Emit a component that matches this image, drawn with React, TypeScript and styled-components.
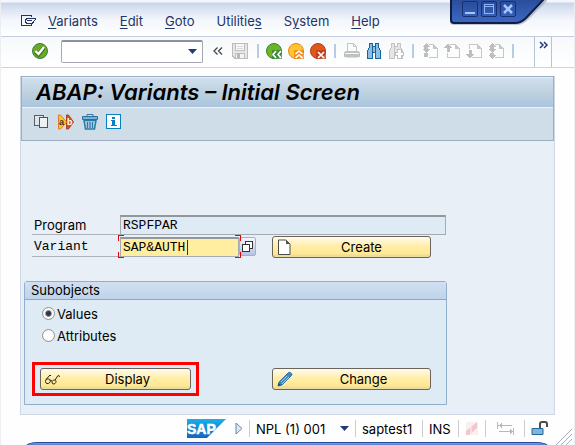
import React from "react";
import styled, { createGlobalStyle } from "styled-components";

const GlobalStyle = createGlobalStyle`
  * { box-sizing: border-box; }
  body { margin: 0; font-family: Inter, "Liberation Sans", sans-serif; font-size: 13px; line-height: 16px; color: #000; }
  button, input, select { font: inherit; color: inherit; margin: 0; }
`;

const Window = styled.div`
  position: relative;
  display: flex;
  flex-direction: column;
  min-height: 100vh;
  overflow: hidden;
  background: #fefefe;
  border-left: 1px solid #eceef2;
  border-right: 1px solid #eceef2;
`;

const MenuBar = styled.nav`
  display: flex;
  align-items: center;
  gap: 22px;
  height: 37px;
  padding: 6px 20px 0;
  border-bottom: 1px solid #c3cddd;
  background: linear-gradient(#f4f7fb 0, #f4f7fb 2px, #c9d5ea 3px, #dde5f3 10px, #f3f6fb 20px, #fff 36px);
`;

const MenuButton = styled.button`
  padding: 0;
  border: 0;
  background: none;
  color: #203468;
  u { text-underline-offset: 2px; }
`;

const WindowMenu = styled(MenuButton)`
  display: flex;
  width: 16px;
  margin-right: -11px;
`;

const CaptionTab = styled.div`
  position: absolute;
  top: 0;
  right: 27px;
  width: 98px;
  height: 27px;
`;

const CaptionShape = styled.svg`
  display: block;
  position: absolute;
  inset: 0;
`;

const CaptionButtons = styled.div`
  position: relative;
  display: flex;
  gap: 3px;
  padding: 1px 0 0 13px;
`;

const CaptionButton = styled.button`
  display: flex;
  width: 16px;
  height: 16px;
  padding: 0;
  border: 1px solid #172f73;
  border-radius: 2px;
  background: linear-gradient(#294c9b, #3960b6);
`;

const ToolBar = styled.div`
  display: flex;
  align-items: center;
  height: 31px;
  padding: 0 22px 2px 31px;
  border-bottom: 1px solid #cbd3df;
  background: linear-gradient(#f7f9fc, #fff);
`;

const IconButton = styled.button<{ $gap?: number }>`
  display: flex;
  flex: none;
  width: 16px;
  height: 16px;
  margin: 0 0 0 ${(p) => p.$gap ?? 6}px;
  padding: 0;
  border: 0;
  background: none;
`;

const CommandBox = styled.div`
  display: grid;
  flex: none;
  width: 142px;
  height: 23px;
  margin: 1px 10px 0 13px;
  align-items: center;
  > * { grid-area: 1 / 1; }
  > svg { justify-self: end; margin-right: 6px; pointer-events: none; }
`;

const CommandSelect = styled.select`
  width: 100%;
  height: 100%;
  appearance: none;
  border: 1px solid #a3a8b1;
  border-top: 2px solid #8c9098;
  border-radius: 2px;
  background: #fff;
`;

const Chevron = styled(IconButton)`
  width: 10px;
`;

const Divider = styled.span<{ $gap?: number }>`
  flex: none;
  width: 2px;
  height: 14px;
  margin-left: ${(p) => p.$gap ?? 8}px;
  background: #b5cce3;
`;

const MoreButton = styled.button`
  display: flex;
  flex: none;
  align-self: stretch;
  width: 18px;
  margin: 0 0 -2px auto;
  padding: 4px 0 4px 4px;
  border: 0;
  border-left: 1px solid #b7c4d8;
  border-right: 1px solid #b7c4d8;
  background: none;
`;

const Screen = styled.main`
  flex: 1;
  margin: 8px 19px 0 19px;
  padding-bottom: 9px;
  border: solid #ced7e6;
  border-width: 0 1px 1px;
  background: #e8eff6;
`;

const Heading = styled.header`
  border: 1px solid #9daec3;
  background: #cedde8;
`;

const Title = styled.h1`
  height: 31px;
  margin: 0;
  padding: 2px 14px;
  border-top: 1px solid #e6eff5;
  border-bottom: 1px solid #edf4f8;
  background: linear-gradient(#cfdfed, #bed1df 50%, #abc4de);
  font-size: 22px;
  font-weight: 600;
  font-style: italic;
  line-height: 24px;
  white-space: nowrap;
`;

const AppToolBar = styled.div`
  display: flex;
  gap: 8px;
  height: 32px;
  padding: 6px 12px;
`;

const Form = styled.form`
  margin: 74px 107px 0 3px;
`;

const Fields = styled.div`
  margin: 0 1px 0 8px;
`;

const FieldRow = styled.div`
  display: flex;
  height: 22px;
`;

const Label = styled.label<{ $mono?: boolean }>`
  flex: none;
  width: 88px;
  height: 20px;
  padding: 2px;
  border-bottom: 1px solid #aeb4ba;
  ${(p) => p.$mono && `font-family: "Liberation Mono", monospace;`}
`;

const TextField = styled.input<{ $active?: boolean }>`
  flex: ${(p) => (p.$active ? "none" : "1")};
  min-width: 0;
  width: 119px;
  height: 20px;
  padding: 0 2px;
  border: 1px solid #a5abb0;
  border-top: 2px solid #92979b;
  background: ${(p) => (p.$active ? "#ffee9f" : "#dfebf4")};
  font-family: "Liberation Mono", monospace;
  outline: 0;
`;

const FocusFrame = styled.div`
  position: relative;
  display: flex;
  width: 119px;
`;

const FocusCorners = styled.svg`
  position: absolute;
  top: -2px;
  left: -2px;
  pointer-events: none;
`;

const Caret = styled.span`
  position: absolute;
  top: 3px;
  left: 67px;
  width: 1px;
  height: 15px;
  background: #20335c;
`;

const LookupButton = styled.button`
  display: flex;
  flex: none;
  width: 17px;
  height: 19px;
  padding: 2px 1px;
  border: 1px solid #a4b2c8;
  border-radius: 2px;
  background: linear-gradient(#f3f7fe, #b4c3e5);
`;

const ActionButton = styled.button<{ $width?: number }>`
  display: flex;
  flex: none;
  align-items: center;
  width: ${(p) => p.$width ?? 159}px;
  height: 22px;
  padding: 0 4px;
  border: 1px solid #69655d;
  border-radius: 3px;
  background: linear-gradient(#fffaf0 0, #fff5cf 4px, #ffeeaa 9px, #ffe98f 17px, #eddc9d 18px);
  span { flex: 1; padding-left: 8px; text-align: center; }
`;

const CreateButton = styled(ActionButton)`
  margin: -1px 15px 0 auto;
  span { padding-left: 4px; }
`;

const Group = styled.fieldset`
  min-width: 0;
  margin: 22px 0 0;
  padding: 0;
  border: 1px solid #8fafcf;
  border-radius: 3px 3px 0 0;
  background: #deebf4;
`;

const GroupTitle = styled.legend`
  float: left;
  width: 100%;
  height: 18px;
  padding: 0 6px;
  border-bottom: 1px solid #88a8c7;
  background: linear-gradient(#d2e0f0, #bed4e9);
`;

const GroupBody = styled.div`
  clear: both;
  padding: 5px 15px 8px 7px;
`;

const RadioLabel = styled.label`
  display: flex;
  align-items: center;
  height: 22px;
  padding: 0 0 5px 10px;
`;

const Radio = styled.input`
  appearance: none;
  width: 13px;
  height: 13px;
  margin: 0 2px 0 0;
  border: 1px solid #929292;
  border-radius: 50%;
  background: radial-gradient(#fff 40%, #f0f0f0);
  &:checked { background: radial-gradient(circle, #303743 0, #303743 2px, #fff 4px, #eee); }
`;

const Actions = styled.div`
  display: flex;
  align-items: center;
  justify-content: space-between;
  margin-top: 13px;
`;

const Highlight = styled.div`
  padding: 3px 5px;
  border: 3px solid #ff0000;
`;

const StatusBar = styled.footer`
  display: flex;
  align-items: center;
  justify-content: flex-end;
  height: 27px;
  padding: 0 26px 0 0;
  white-space: nowrap;
`;

const StatusText = styled.span<{ $width: number }>`
  width: ${(p) => p.$width}px;
  margin-left: 6px;
`;

const StatusButton = styled.button<{ $width: number; $gap?: number }>`
  display: flex;
  flex: none;
  width: ${(p) => p.$width}px;
  margin: 0 0 0 ${(p) => p.$gap ?? 7}px;
  padding: 0;
  border: 0;
  background: none;
`;

const StatusDivider = styled.span<{ $gap?: number }>`
  flex: none;
  width: 1px;
  height: 17px;
  margin-left: ${(p) => p.$gap ?? 7}px;
  background: #cccccc;
`;

const BottomEdge = styled.div`
  height: 4px;
  margin: 0 26px 0 25px;
  border-top: 1px solid #23489c;
  border-radius: 12px 12px 0 0 / 4px 4px 0 0;
  background: linear-gradient(#83a2df, #3865bd);
`;

const Grip = styled.svg`
  position: absolute;
  right: 1px;
  bottom: 0;
`;

const Icon = ({ w = 16, h = 16, children, crisp = false }: { w?: number; h?: number; children: React.ReactNode; crisp?: boolean }) => (
  <svg width={w} height={h} viewBox={`0 0 ${w} ${h}`} fill="none" aria-hidden="true" shapeRendering={crisp ? "crispEdges" : undefined}>
    {children}
  </svg>
);

const DownArrow = () => (
  <Icon w={9} h={5}><path d="M0 0h9L4.5 5z" fill="#203a78" /></Icon>
);

const CheckIcon = () => (
  <Icon>
    <circle cx="8" cy="8" r="7.5" fill="#68ad20" stroke="#417b3e" />
    <path d="M3.5 8.5l3 3 5.5-7" stroke="#396e27" strokeWidth="4" />
    <path d="M3.5 8l3 3L12 4" stroke="#fff" strokeWidth="2.4" />
  </Icon>
);

const SaveIcon = () => (
  <Icon crisp>
    <path d="M0 0h16v16H2l-2-2z" fill="#bdbdbd" />
    <path d="M1 1h2v7h10V1h2v14h-2v-5H3v5L1 13z" fill="#e6e6e6" />
    <path d="M4 1h8v6H4z" fill="#f8f8f8" />
    <path d="M5 3h6M5 5h6" stroke="#dadada" />
    <path d="M4 11h8v4H4z" fill="#f4f4f4" /><path d="M5 11h3v4H5z" fill="#b8b8b8" />
  </Icon>
);

const RoundIcon = ({ fill, edge, glyph }: { fill: string; edge: string; glyph: string }) => (
  <Icon>
    <circle cx="8" cy="8" r="7.5" fill={fill} stroke={edge} />
    <path d="M6 7h10v9H6z" fill={edge} opacity=".75" />
    <path d={glyph} stroke="#fff" strokeWidth="1.6" />
  </Icon>
);

const PrintIcon = () => (
  <Icon crisp>
    <path d="M3.5 8V.5h6l3 3V8" fill="#fafafa" stroke="#c5c5c5" /><path d="M9.5 .5v3h3" stroke="#c5c5c5" />
    <path d="M1 8h14l1 2v4H0v-4z" fill="#c1c1c1" /><path d="M1 10h14v1H1z" fill="#f7f7f7" />
    <path d="M2 14.5h12" stroke="#ddd" />
  </Icon>
);

const FindIcon = () => (
  <Icon crisp>
    <path d="M3.5 .5h3v3h3v-3h3v4l2 3v8h-5v-6h-3v6h-5v-8l2-3z" fill="#8fbce0" stroke="#11659b" />
    <path d="M6.5 3v7M9.5 3v7" stroke="#11659b" />
  </Icon>
);

const FindNextIcon = () => (
  <Icon crisp>
    <path d="M3.5 .5h3v3h3v-3h3v4l2 3v8h-5v-6h-3v6h-5v-8l2-3z" fill="#e6e6e6" stroke="#c4c4c4" />
    <path d="M6.5 3v7" stroke="#c4c4c4" />
    <path d="M9 6h5v3h2v4h-2v3H9v-3H7V9h2z" fill="#c0c0c0" />
    <path d="M10 7h3v3h2v2h-2v3h-3v-3H8v-2h2z" fill="#fff" />
  </Icon>
);

const pageArrows = {
  first: "M4 0l4 4H6v2h2L4 10 0 6h2V4H0zM2 10h4v4H2z",
  up: "M4 0l4 5H5.5v4h-3V5H0z",
  down: "M2.5 7h3v4H8l-4 5-4-5h2.500z",
  last: "M4 0l4 4H6v2h2L4 10 0 6h2V4H0zM2 10h4v2h2l-4 4-4-4h2z",
};

const PageIcon = ({ kind }: { kind: keyof typeof pageArrows }) => (
  <Icon crisp>
    <path d="M3.5 1.5h8l4 4v9h-12z" fill="#fcfcfc" stroke="#c7c7c7" />
    <path d="M11 1v5h5z" fill="#c7c7c7" />
    <path d={pageArrows[kind]} fill="#bebebe" stroke="#fff" strokeWidth="2" paintOrder="stroke" />
  </Icon>
);

const SapLogo = () => (
  <svg width="39" height="19" viewBox="0 0 39 19" role="img" aria-label="SAP">
    <defs><linearGradient id="sap" x2="0" y2="1"><stop stopColor="#18b0ec" /><stop offset="1" stopColor="#1864b6" /></linearGradient></defs>
    <path d="M0 0h39L20 19H0z" fill="url(#sap)" />
    <text x="0" y="15" fill="#fff" stroke="#fff" strokeWidth=".5" fontFamily="Liberation Sans" fontSize="14" fontWeight="700">SAP</text>
  </svg>
);

const pages = ["first", "up", "down", "last"] as const;

export default function App() {
  return (
    <>
      <GlobalStyle />
      <Window>
        <MenuBar aria-label="Main menu">
          <WindowMenu aria-label="Window menu">
            <Icon w={16} h={12} crisp>
              <path d="M10.5 2V.5h-10v10h10V9" stroke="#203468" />
              <path d="M15 3.5H6L4.5 5v2L6 8.5h5L15 4M6 5.5h5" stroke="#203468" />
            </Icon>
          </WindowMenu>
          <MenuButton><u>V</u>ariants</MenuButton>
          <MenuButton><u>E</u>dit</MenuButton>
          <MenuButton><u>G</u>oto</MenuButton>
          <MenuButton>Utilitie<u>s</u></MenuButton>
          <MenuButton>S<u>y</u>stem</MenuButton>
          <MenuButton><u>H</u>elp</MenuButton>
        </MenuBar>

        <CaptionTab>
          <CaptionShape width="98" height="27" viewBox="0 0 98 27" aria-hidden="true">
            <defs><linearGradient id="caption" x2="0" y2="1"><stop stopColor="#294b98" /><stop offset="1" stopColor="#3c69c5" /></linearGradient></defs>
            <path d="M1 0v22q0 3 4 3h62q7 0 12-5L98 1V0z" fill="#8895af" opacity=".5" />
            <path d="M2 -2v22q0 3 3 3h61q6 0 11-5L96 -2z" fill="url(#caption)" stroke="#101e42" strokeWidth="2" />
          </CaptionShape>
          <CaptionButtons>
            <CaptionButton aria-label="Minimize"><Icon w={14} h={14}><path d="M2 11h10" stroke="#a5c6ff" strokeWidth="2" /></Icon></CaptionButton>
            <CaptionButton aria-label="Maximize"><Icon w={14} h={14} crisp><path d="M2.5 2.5h9v9h-9zM2 4h10" stroke="#91b5fa" /></Icon></CaptionButton>
            <CaptionButton aria-label="Close"><Icon w={14} h={14}><path d="M3 3l8 8M11 3l-8 8" stroke="#a5c6ff" strokeWidth="2.5" /></Icon></CaptionButton>
          </CaptionButtons>
        </CaptionTab>

        <ToolBar>
          <IconButton $gap={0} aria-label="Enter"><CheckIcon /></IconButton>
          <CommandBox>
            <CommandSelect aria-label="Command"><option value="" /></CommandSelect>
            <DownArrow />
          </CommandBox>
          <Chevron $gap={0} aria-label="Collapse command field"><Icon w={10}><path d="M4.5 4.500L1 8l3.500 3.500M9 4.500L5.500 8 9 11.500" stroke="#444" strokeWidth="1.300" /></Icon></Chevron>
          <IconButton $gap={9} aria-label="Save"><SaveIcon /></IconButton>
          <Divider $gap={9} />
          <IconButton $gap={7} aria-label="Back"><RoundIcon fill="#6db522" edge="#34803c" glyph="M10 8l-3 3.5L10 15M15 8l-3 3.5L15 15" /></IconButton>
          <IconButton aria-label="Exit"><RoundIcon fill="#ffc629" edge="#ed801c" glyph="M7.5 11l3.500-3 3.500 3M7.500 15l3.500-3 3.500 3" /></IconButton>
          <IconButton aria-label="Cancel"><RoundIcon fill="#dc5b19" edge="#bd351c" glyph="M8 9l6 6M14 9l-6 6" /></IconButton>
          <Divider />
          <IconButton $gap={8} aria-label="Print"><PrintIcon /></IconButton>
          <IconButton aria-label="Find"><FindIcon /></IconButton>
          <IconButton aria-label="Find next"><FindNextIcon /></IconButton>
          <Divider />
          {pages.map((kind, i) => (
            <IconButton key={kind} $gap={i ? 6 : 8} aria-label={`Page ${kind}`}><PageIcon kind={kind} /></IconButton>
          ))}
          <Divider />
          <MoreButton aria-label="More"><Icon w={10} h={8}><path d="M1 1l3 3-3 3M5 1l3 3-3 3" stroke="#263c78" strokeWidth="1.5" /></Icon></MoreButton>
        </ToolBar>

        <Screen>
          <Heading>
            <Title>ABAP: Variants – Initial Screen</Title>
            <AppToolBar>
              <IconButton $gap={0} aria-label="Copy"><Icon crisp><path d="M.5 1.5h9v10h-9z" stroke="#555f68" fill="#dce6ed" /><path d="M4.500 2.500h10v12h-10z" fill="#cedde8" /><path d="M5.5 3.5h8v10h-8z" fill="#eef0f1" stroke="#a93226" /></Icon></IconButton>
              <IconButton $gap={0} aria-label="Rename">
                <Icon>
                  <path d="M8.5 1v14h2l5-7-5-7z" fill="#d94f20" stroke="#a94123" />
                  <path d="M.5 1v14h2l6-7-6-7z" fill="#ffc61c" stroke="#e67924" />
                  <text x="1" y="11" fontFamily="Liberation Sans" fontSize="9" fontWeight="700" fill="#333">a</text>
                  <text x="9" y="11" fontFamily="Liberation Sans" fontSize="9" fontWeight="700" fill="#fff">b</text>
                </Icon>
              </IconButton>
              <IconButton $gap={0} aria-label="Delete"><Icon><path d="M5 2V.5h6V2" stroke="#317da8" /><path d="M.5 2.5h15v3H.5z" fill="#81afcf" stroke="#286f9e" /><path d="M2 6.5h12L12.5 15h-9z" fill="#b9d3e4" stroke="#287cac" strokeWidth="1.5" /><path d="M5.5 8v6M8 8v6M10.5 8v6" stroke="#287cac" strokeWidth="1.3" /></Icon></IconButton>
              <IconButton $gap={0} aria-label="Information"><Icon crisp><path d="M.5 .5h14v14H.5z" fill="#fff" stroke="#0780be" /><path d="M6 3h3v2H6zM5 6h4v5h2v1H5v-1h1V7H5z" fill="#0780be" /></Icon></IconButton>
            </AppToolBar>
          </Heading>

          <Form onSubmit={(e) => e.preventDefault()}>
            <Fields>
              <FieldRow>
                <Label htmlFor="program">Program</Label>
                <TextField id="program" defaultValue="RSPFPAR" readOnly />
              </FieldRow>
              <FieldRow>
                <Label htmlFor="variant" $mono>Variant</Label>
                <FocusFrame>
                  <TextField id="variant" $active defaultValue="SAP&amp;AUTH" />
                  <Caret />
                  <FocusCorners width="123" height="24" fill="none" stroke="#ed0000" shapeRendering="crispEdges"><path d="M6 .5H.5V6M117 .5h5V6M6 22.5H.5V17M117 22.5h5V17" /></FocusCorners>
                </FocusFrame>
                <LookupButton type="button" aria-label="Variant value list"><Icon w={13} h={13} crisp><path d="M4.5 1.5h7v7h-7z" fill="#fff" stroke="#333" /><path d="M1.5 4.5h7v7h-7z" fill="#fff" stroke="#333" /></Icon></LookupButton>
                <CreateButton type="button"><Icon><path d="M1.5 1h7.5l4 4v10.5H1.500z" fill="#fff" stroke="#4b4b4b" /><path d="M9 1v4h4z" fill="#555" /></Icon><span>Create</span></CreateButton>
              </FieldRow>
            </Fields>

            <Group>
              <GroupTitle>Subobjects</GroupTitle>
              <GroupBody>
                <RadioLabel><Radio type="radio" name="subobject" defaultChecked />Values</RadioLabel>
                <RadioLabel><Radio type="radio" name="subobject" />Attributes</RadioLabel>
                <Actions>
                  <Highlight>
                    <ActionButton type="button" $width={151}><Icon><path d="M.7 10C0 8 4 7 5 9s-1 4-3 3.500S.5 10 .7 10zM7 11c0-2 4-3 4-.5s-4 4-4 .5zM5 9l2 1M1 8.500L5 4l1 1M10 9l3-4.500 2 1" stroke="#222" /></Icon><span>Display</span></ActionButton>
                  </Highlight>
                  <ActionButton type="button"><Icon><path d="M1 15l1-4 9-9Q12 .5 14 2t0 3L5 14z" fill="#4389bb" stroke="#3078a8" /><path d="M4 11l6-6M5 13l7-7" stroke="#a9cce5" /><path d="M1 15l.7-3L4 14z" fill="#18466b" /></Icon><span>Change</span></ActionButton>
                </Actions>
              </GroupBody>
            </Group>
          </Form>
        </Screen>

        <StatusBar>
          <SapLogo />
          <StatusButton $width={8} $gap={9} aria-label="Show status fields"><Icon w={8} h={13}><path d="M1 1v11l6-5.5z" fill="#dce9f5" stroke="#6a87ac" /></Icon></StatusButton>
          <StatusDivider $gap={6} />
          <StatusText $width={78}>NPL (1) 001</StatusText>
          <StatusButton $width={9} $gap={6} aria-label="System information"><DownArrow /></StatusButton>
          <StatusDivider $gap={6} />
          <StatusText $width={53}>saptest1</StatusText>
          <StatusDivider />
          <StatusText $width={22}>INS</StatusText>
          <StatusDivider />
          <StatusButton $width={12} aria-label="Recording"><Icon w={12} h={13}><path d="M0 0h12v13H0z" fill="#f6f0f1" /><path d="M0 9L11 0v6L3 13H0z" fill="#f3c6cc" /><path d="M5 5v6" stroke="#f8dde1" strokeWidth="2" /></Icon></StatusButton>
          <StatusDivider />
          <StatusButton $width={17} $gap={11} aria-label="Transfer direction"><Icon w={17} h={13} crisp><path d="M.5 0v7M1 3.5h14M4 1v5M3 2v3M16.5 6v7M2 9.5h14M13 7v5M14 8v3" stroke="#b8b8b8" /></Icon></StatusButton>
          <StatusDivider $gap={10} />
          <StatusButton $width={17} $gap={6} aria-label="Unlocked"><Icon w={17} h={15}><path d="M9 7V3q0-2 2-2h3q2 0 2 2v3" stroke="#4b4b4b" strokeWidth="2" /><path d="M1 7.5h11v6H1z" fill="#83b3da" stroke="#226a9c" /></Icon></StatusButton>
        </StatusBar>
        <BottomEdge />
        <Grip width="17" height="18" fill="none" aria-hidden="true"><path d="M0 17L16 1M5 17L16 6M10 17l6-6" stroke="#a5afc5" /></Grip>
      </Window>
    </>
  );
}
